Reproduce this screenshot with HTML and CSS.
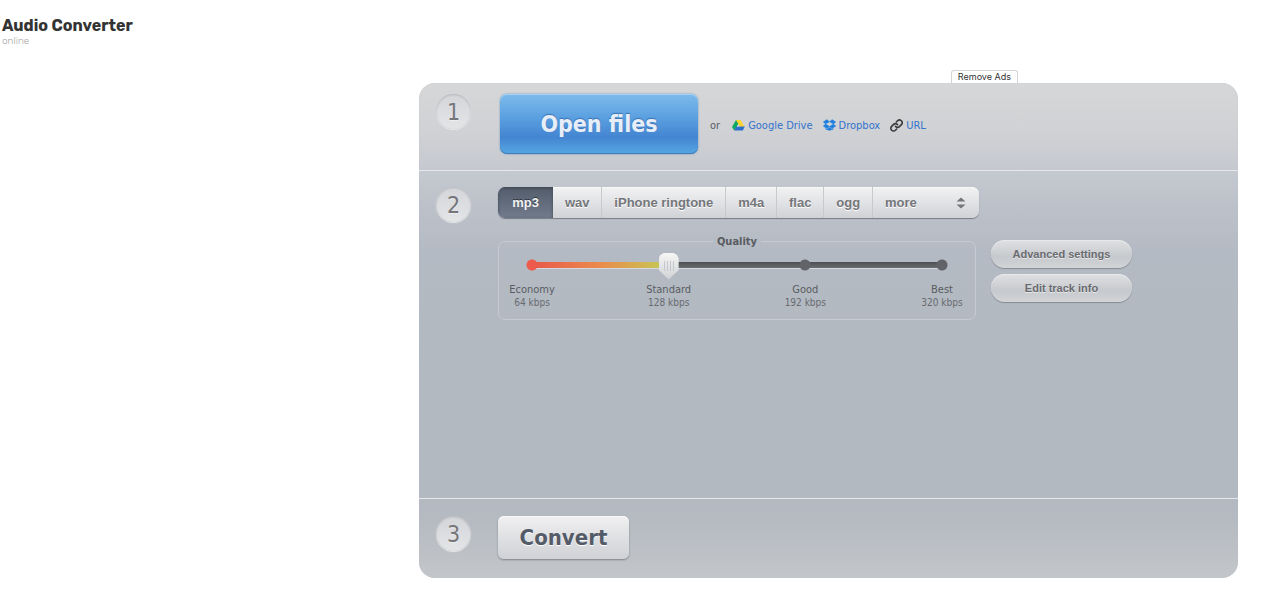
FILE: index.html
```html
<!DOCTYPE html>
<html lang="en">
<head>
    <meta charset="UTF-8">
    <meta name="viewport" content="width=device-width, initial-scale=1.0">
    <title>Audio Converter</title>
    <link rel="stylesheet" href="styles.css">
</head>
<body>
    <header class="header">
        <h1>Audio Converter</h1>
        <p>online</p>
    </header>

    <main class="converter">
        <div class="ads">
            <a href="#" class="remove-ads">Remove Ads</a>
        </div>

        <div class="panel">
            <section class="step step-open">
                <span class="number">1</span>
                <div class="sources">
                    <button type="button" class="btn-open">Open files</button>
                    <span class="or">or</span>
                    <a href="#" class="source">
                        <svg width="13" height="12" viewBox="0 0 13 12">
                            <path d="M4 1h4.4L5.6 6.6 2.2 11.5 0 8z" fill="#11a861"/>
                            <path d="M4 1h4.6L12.6 8H8.2z" fill="#ffd42e"/>
                            <path d="M4.3 7.6h8.5L10.8 11.5H2.2z" fill="#2a6fd1"/>
                            <path d="M6.1 5.4 7.4 7.6H4.9z" fill="#d9e3d0"/>
                        </svg>
                        <span>Google Drive</span>
                    </a>
                    <a href="#" class="source">
                        <svg width="13" height="12" viewBox="0 0 14 12" fill="#1f7fe0" stroke="#1f7fe0" stroke-width="0.4">
                            <path d="M4.1 0.2 0.2 2.8l2.7 2.2L7 2.5zM9.9 0.2 7 2.5 11.1 5l2.7-2.2zM0.2 7.2 4.1 9.8 7 7.5 2.9 5zM7 7.5 9.9 9.8l3.9-2.6L11.1 5zM7 8.4 4.1 10.6 2.9 9.8v0.7L7 11.8l4.1-1.3V9.8l-1.2 0.8z"/>
                        </svg>
                        <span>Dropbox</span>
                    </a>
                    <a href="#" class="source">
                        <svg width="13" height="13" viewBox="0 0 24 24" fill="none" stroke="#3a3a3a" stroke-width="3" stroke-linecap="round">
                            <path d="M10 13.5a5 5 0 0 0 7.4 0.5l3.6-3.6a5 5 0 0 0-7.1-7.1l-2.2 2.2"/>
                            <path d="M14 10.5a5 5 0 0 0-7.4-0.5L3 13.6a5 5 0 0 0 7.1 7.1l2.2-2.2"/>
                        </svg>
                        <span>URL</span>
                    </a>
                </div>
            </section>

            <section class="step step-format">
                <span class="number">2</span>
                <div class="options">
                    <div class="formats">
                        <button type="button" class="active">mp3</button>
                        <button type="button">wav</button>
                        <button type="button">iPhone ringtone</button>
                        <button type="button">m4a</button>
                        <button type="button">flac</button>
                        <button type="button">ogg</button>
                        <div class="more">
                            <select aria-label="More formats">
                                <option>more</option>
                                <option>mp2</option>
                                <option>amr</option>
                            </select>
                            <svg width="10" height="12" viewBox="0 0 10 12" fill="#747679">
                                <path d="M5 0.5 9.5 4.5h-9zM5 11.5 0.5 7.5h9z"/>
                            </svg>
                        </div>
                    </div>

                    <div class="settings">
                        <fieldset class="quality">
                            <legend>Quality</legend>
                            <input type="range" min="0" max="3" value="1" aria-label="Quality">
                            <div class="levels">
                                <div>Economy<small>64 kbps</small></div>
                                <div>Standard<small>128 kbps</small></div>
                                <div>Good<small>192 kbps</small></div>
                                <div>Best<small>320 kbps</small></div>
                            </div>
                        </fieldset>
                        <div class="extras">
                            <button type="button">Advanced settings</button>
                            <button type="button">Edit track info</button>
                        </div>
                    </div>
                </div>
            </section>

            <section class="step step-convert">
                <span class="number">3</span>
                <div>
                    <button type="button" class="btn-convert">Convert</button>
                </div>
            </section>
        </div>
    </main>
</body>
</html>
```
FILE: styles.css
```css
* {
    margin: 0;
    padding: 0;
    box-sizing: border-box;
}

body {
    background: #fff;
    color: #595c61;
    font-family: Tahoma, "DejaVu Sans Condensed", "DejaVu Sans", sans-serif;
    font-size: 11px;
}

button,
select {
    border: none;
    cursor: pointer;
}

a {
    text-decoration: none;
}

/* Header */
.header {
    height: 70px;
    padding: 15px 2px 0;
    font-family: Rubik, Inter, sans-serif;
}

.header h1 {
    color: #333;
    font-size: 16px;
    font-weight: 700;
    line-height: 21px;
}

.header p {
    color: #aaa;
    font-size: 10px;
    font-weight: 300;
    line-height: 11px;
}

.converter {
    margin: 0 29px 26px 419px;
}

.ads {
    display: flex;
    justify-content: flex-end;
    padding-right: 220px;
}

.remove-ads {
    padding: 0 6px;
    border: 1px solid #d5d5d5;
    border-bottom: none;
    border-radius: 3px 3px 0 0;
    color: #333;
    font-family: Inter, sans-serif;
    font-size: 9px;
    line-height: 12px;
}

/* Panel */
.panel {
    border-radius: 16px;
    background: linear-gradient(#d6d7d8 0, #d0d1d4 50px, #c4c8cf 90px, #bcc1c9 125px, #b4bac3 170px, #b2b9c0 260px, #b3b9c1 415px, #b6bbc2 440px, #c3c6c9 100%);
    box-shadow: inset 0 0 1px #b5b8bc;
}

.step {
    display: grid;
    grid-template-columns: 35px 1fr;
    gap: 27px;
    padding: 0 17px;
}

.step + .step {
    border-top: 1px solid #e6e8ea;
}

.step-open {
    padding-top: 11px;
    padding-bottom: 16px;
}

.step-format {
    min-height: 328px;
    padding-top: 16px;
}

.step-convert {
    padding-top: 17px;
    padding-bottom: 19px;
}

.number {
    width: 35px;
    height: 35px;
    border-radius: 50%;
    background: linear-gradient(#d3d5d9, #e4e5e7);
    box-shadow: inset 0 1px 2px #b4b7bc, 0 1px 1px #e8e8e8;
    color: #74767a;
    font-size: 23px;
    line-height: 37px;
    text-align: center;
    text-shadow: 0 1px 0 #eee;
}

/* Step 1 */
.sources {
    display: flex;
    align-items: center;
}

.btn-open {
    width: 198px;
    height: 60px;
    margin: 0 12px 0 2px;
    border-radius: 7px;
    background: linear-gradient(#7dbbec, #5a9fe0 40%, #4385d1 72%, #56a7e2);
    box-shadow: inset 0 1px 0 #a4d2f5, inset 0 -1px 0 #3d7cb8, 0 0 2px #6a8fb5;
    color: #e8eef8;
    font: bold 23px Tahoma, "DejaVu Sans Condensed", "DejaVu Sans", sans-serif;
    text-shadow: 0 -1px 1px #3a70b0;
}

.or {
    margin-right: 12px;
}

.or,
.source {
    padding-top: 2px;
}

.source {
    display: flex;
    align-items: center;
    gap: 3px;
    margin-right: 10px;
    color: #3173cd;
}

/* Step 2 */
.formats {
    display: flex;
    width: 481px;
    height: 31px;
    border-radius: 7px;
    background: linear-gradient(#f2f2f3, #e0e1e4 55%, #d0d2d6);
    box-shadow: inset 0 1px 0 #f8f8f8, 0 1px 1px #777d86;
    overflow: hidden;
}

.formats button,
.formats select {
    background: transparent;
    color: #74767a;
    font: bold 13px Arial, "Liberation Sans", sans-serif;
    text-shadow: 0 1px 0 #fff;
}

.formats button {
    flex: auto;
    border-right: 1px solid #c6c9cd;
}

.formats .active {
    flex: 0 0 55px;
    border-right: none;
    background: linear-gradient(#535c6b, #717b8c);
    box-shadow: inset 0 1px 3px #3c4450;
    color: #f2f2f3;
    text-shadow: 0 -1px 0 #30353e;
}

.more {
    position: relative;
    flex: 0 0 106px;
}

.more select {
    width: 100%;
    height: 100%;
    padding-left: 12px;
    appearance: none;
}

.more svg {
    position: absolute;
    top: 10px;
    right: 13px;
    pointer-events: none;
}

.settings {
    display: flex;
    gap: 15px;
    margin-top: 15px;
}

.quality {
    width: 478px;
    padding: 0 3px 10px;
    border: 1px solid #c6cbd2;
    border-radius: 7px;
}

.quality legend {
    margin: 0 auto;
    padding: 2px 4px 0;
    font-weight: bold;
    line-height: 14px;
}

.quality input {
    display: block;
    width: 430px;
    height: 28px;
    margin: 3px 20px;
    appearance: none;
    /* stops first, then the filled part, then the rest of the track */
    background:
        radial-gradient(circle at 10px 13px, #ee5a4c 5px, transparent 6px),
        radial-gradient(circle at 283px 13px, #626368 5px, transparent 6px),
        radial-gradient(circle at 420px 13px, #626368 5px, transparent 6px),
        linear-gradient(90deg, #e9584a, #ea8b4c 50%, #c3cc55) 10px 10px / 136px 6px no-repeat,
        linear-gradient(#4d4f54, #6b6c70) 10px 10px / 410px 6px no-repeat,
        linear-gradient(#d5d9dd, #d5d9dd) 10px 16px / 410px 1px no-repeat;
}

.quality input::-webkit-slider-thumb {
    width: 20px;
    height: 27px;
    appearance: none;
    background:
        repeating-linear-gradient(90deg, #c5c7ca 0 1px, transparent 1px 3px) 5px 8px / 10px 10px no-repeat,
        linear-gradient(#f6f6f6, #cfd1d4);
    clip-path: polygon(0 22%, 8% 9%, 30% 0, 70% 0, 92% 9%, 100% 22%, 100% 65%, 50% 100%, 0 65%);
}

.levels {
    display: flex;
    justify-content: space-between;
    line-height: 13px;
}

.levels div {
    width: 60px;
    text-align: center;
}

.levels small {
    display: block;
    color: #686b70;
    font-size: 10px;
    line-height: 13px;
}

.extras {
    display: flex;
    flex-direction: column;
    gap: 6px;
    padding-top: 7px;
}

.extras button {
    width: 141px;
    height: 28px;
    border-radius: 14px;
    background: linear-gradient(#dfe0e2, #c6c9cd 60%, #d2d4d7);
    box-shadow: inset 0 1px 0 #e8e9ea, 0 1px 1px #858a92;
    color: #696b70;
    font: bold 11px Arial, "Liberation Sans", sans-serif;
    text-shadow: 0 1px 0 #e8e8e8;
}

/* Step 3 */
.btn-convert {
    width: 131px;
    height: 43px;
    border-radius: 6px;
    background: linear-gradient(#f0f0f1, #dcdde0 60%, #d0d2d6);
    box-shadow: inset 0 1px 0 #fafafa, 0 1px 2px #7d828a;
    color: #545b68;
    font: bold 22px Tahoma, "DejaVu Sans Condensed", "DejaVu Sans", sans-serif;
    text-shadow: 0 1px 0 #fff;
}
```
